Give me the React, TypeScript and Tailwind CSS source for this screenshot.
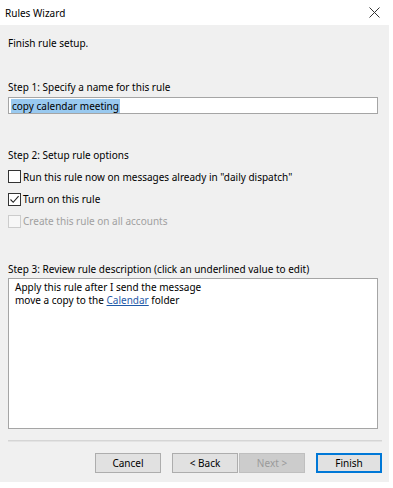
import React from "react";

const font = { fontFamily: '"Noto Sans", "Open Sans", sans-serif' };

function Check({ checked, disabled }: { checked?: boolean; disabled?: boolean }) {
  return (
    <div
      className={`w-[13px] h-[13px] border ${disabled ? "border-[#cccccc] bg-[#f7f7f7]" : "border-[#333333] bg-white"} flex items-center justify-center`}
    >
      {checked && (
        <svg width="11" height="11" viewBox="0 0 11 11">
          <path d="M1.5 5.5 L4.2 8.3 L9.6 2.2" stroke="#222" strokeWidth="1.1" fill="none" />
        </svg>
      )}
    </div>
  );
}

export default function App() {
  return (
    <div className="w-[393px] h-[488px] bg-white text-[10px] leading-[16px] text-black" style={font}>
      <div className="h-[25px] w-[389px] flex items-center justify-between pl-[5px] pr-[9px]">
        <span className="text-[10px]">Rules Wizard</span>
        <svg width="11" height="11" viewBox="0 0 11 11">
          <path d="M0.5 0.5 L10.5 10.5 M10.5 0.5 L0.5 10.5" stroke="#333" strokeWidth="1" />
        </svg>
      </div>
      <div className="w-[389px] h-[457px] bg-[#f0f0f0] flex flex-col pl-[8px] pr-[7px]">
        <div className="mt-[10px]">Finish rule setup.</div>
        <div className="mt-[28px]">Step 1: Specify a name for this rule</div>
        <div className="mt-[2px] w-[370px] h-[17px] bg-white border border-[#a5a5a5] flex items-center pl-[2px]">
          <span className="bg-[#99c9ef] leading-[14px] px-[1px]">copy calendar meeting</span>
        </div>
        <div className="mt-[33px]">Step 2: Setup rule options</div>
        <div className="mt-[2px] h-[23px] flex items-center gap-[2px]">
          <Check />
          <span>Run this rule now on messages already in "daily dispatch"</span>
        </div>
        <div className="h-[22px] flex items-center gap-[2px]">
          <Check checked />
          <span>Turn on this rule</span>
        </div>
        <div className="h-[22px] flex items-center gap-[2px] text-[#a0a0a0]">
          <Check disabled />
          <span>Create this rule on all accounts</span>
        </div>
        <div className="mt-[29px]">Step 3: Review rule description (click an underlined value to edit)</div>
        <div className="mt-[1px] w-[370px] h-[151px] bg-white border border-[#a5a5a5] pl-[6px] pt-[2px] leading-[13px]">
          <div>Apply this rule after I send the message</div>
          <div>
            move a copy to the <span className="text-[#1f5aa8] underline">Calendar</span> folder
          </div>
        </div>
        <div className="mt-[11px] w-[374px] h-[2px] border-t border-[#d5d5d5] bg-[#e3e3e3]"></div>
        <div className="mt-[11px] flex w-[374px] justify-end">
          <button className="w-[66px] h-[20px] bg-[#e1e1e1] border border-[#adadad] text-[10px] leading-[16px]">Cancel</button>
          <button className="ml-[11px] w-[66px] h-[20px] bg-[#e1e1e1] border border-[#adadad] text-[10px] leading-[16px]">&lt; Back</button>
          <button className="ml-[1px] w-[66px] h-[20px] bg-[#cccccc] border border-[#bfbfbf] text-[#9a9a9a] text-[10px] leading-[16px]">Next &gt;</button>
          <button className="ml-[11px] w-[66px] h-[20px] bg-[#e1e1e1] border-2 border-[#0078d7] text-[10px] leading-[14px]">Finish</button>
        </div>
      </div>
    </div>
  );
}
